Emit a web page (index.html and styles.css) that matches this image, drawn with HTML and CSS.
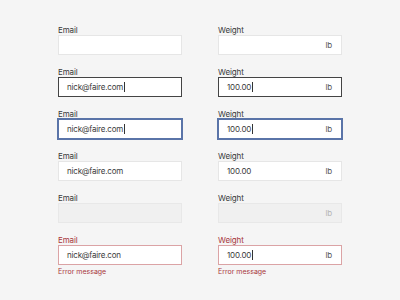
FILE: index.html
```html
<!DOCTYPE html>
<html lang="en">
<head>
    <meta charset="UTF-8">
    <meta name="viewport" content="width=device-width, initial-scale=1.0">
    <title>Input States</title>
    <link rel="stylesheet" href="styles.css">
</head>
<body>
    <div class="states">
        <!-- Empty -->
        <div class="field">
            <label>Email</label>
            <div class="box"></div>
        </div>
        <div class="field">
            <label>Weight</label>
            <div class="box"><span class="value"></span><span class="unit">lb</span></div>
        </div>

        <!-- Typing -->
        <div class="field">
            <label>Email</label>
            <div class="box active"><span class="value">nick@faire.com<span class="caret"></span></span></div>
        </div>
        <div class="field">
            <label>Weight</label>
            <div class="box active"><span class="value">100.00<span class="caret"></span></span><span class="unit">lb</span></div>
        </div>

        <!-- Focused -->
        <div class="field">
            <label>Email</label>
            <div class="box focus"><span class="value">nick@faire.com<span class="caret"></span></span></div>
        </div>
        <div class="field">
            <label>Weight</label>
            <div class="box focus"><span class="value">100.00<span class="caret"></span></span><span class="unit">lb</span></div>
        </div>

        <!-- Filled -->
        <div class="field">
            <label>Email</label>
            <div class="box"><span class="value">nick@faire.com</span></div>
        </div>
        <div class="field">
            <label>Weight</label>
            <div class="box"><span class="value">100.00</span><span class="unit">lb</span></div>
        </div>

        <!-- Disabled -->
        <div class="field">
            <label>Email</label>
            <div class="box disabled"></div>
        </div>
        <div class="field">
            <label>Weight</label>
            <div class="box disabled"><span class="value"></span><span class="unit">lb</span></div>
        </div>

        <!-- Error -->
        <div class="field error">
            <label>Email</label>
            <div class="box"><span class="value">nick@faire.con</span></div>
            <p class="message">Error message</p>
        </div>
        <div class="field error">
            <label>Weight</label>
            <div class="box"><span class="value">100.00<span class="caret"></span></span><span class="unit">lb</span></div>
            <p class="message">Error message</p>
        </div>
    </div>
</body>
</html>
```

FILE: styles.css
```css
body {
    margin: 0;
    background-color: #f5f5f5;
    font-family: Inter, "Noto Sans", sans-serif;
    color: #333;
}

.states {
    display: grid;
    grid-template-columns: 124px 124px;
    column-gap: 36px;
    row-gap: 13px;
    padding: 26px 0 0 58px;
}

.field {
    display: flex;
    flex-direction: column;
}

label {
    font-size: 8px;
    line-height: 9px;
    letter-spacing: -0.1px;
    color: #3a3a3a;
}

.box {
    box-sizing: border-box;
    height: 20px;
    display: flex;
    align-items: center;
    justify-content: space-between;
    padding: 0 9px 0 8px;
    background-color: #fff;
    border: 1px solid #e6e6e6;
    font-size: 8px;
    letter-spacing: -0.2px;
    color: #3a3a3a;
}

.value {
    display: flex;
    align-items: center;
}

.unit {
    color: #555;
}

.caret {
    display: inline-block;
    width: 1px;
    height: 10px;
    margin-left: 1px;
    background-color: #333;
}

.active {
    border-color: #444;
}

.focus {
    border-color: #5a74a8;
    box-shadow: 0 0 0 1px #5a74a8;
}

.disabled {
    background-color: #f0f0f0;
    border-color: #e8e8e8;
}

.disabled .unit {
    color: #b5b5b5;
}

.error label {
    color: #a8373c;
}

.error .box {
    border-color: #dba3a5;
}

.message {
    margin: 2px 0 0;
    font-size: 7px;
    color: #a8373c;
}
```
